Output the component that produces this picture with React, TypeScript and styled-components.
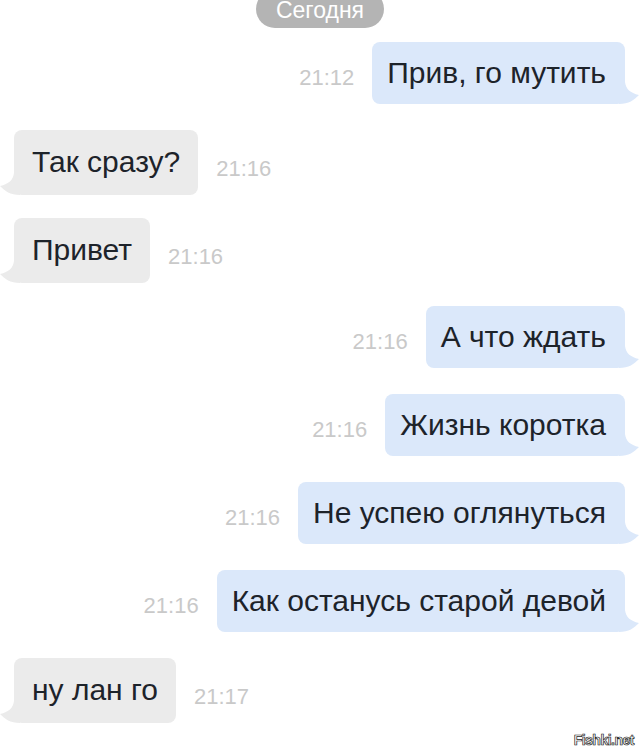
import React from "react";
import styled, { createGlobalStyle } from "styled-components";

type Side = "in" | "out";

const messages: { side: Side; text: string; time: string }[] = [
  { side: "out", text: "Прив, го мутить", time: "21:12" },
  { side: "in", text: "Так сразу?", time: "21:16" },
  { side: "in", text: "Привет", time: "21:16" },
  { side: "out", text: "А что ждать", time: "21:16" },
  { side: "out", text: "Жизнь коротка", time: "21:16" },
  { side: "out", text: "Не успею оглянуться", time: "21:16" },
  { side: "out", text: "Как останусь старой девой", time: "21:16" },
  { side: "in", text: "ну лан го", time: "21:17" },
];

const colors = {
  out: "#dbe8fa",
  in: "#ebebeb",
};

const GlobalStyle = createGlobalStyle`
  html, body {
    margin: 0;
    padding: 0;
    background: #ffffff;
  }
  body {
    font-family: "Liberation Sans", Arial, sans-serif;
  }
`;

const Screen = styled.div`
  position: relative;
  width: 640px;
  height: 753px;
  overflow: hidden;
  background: #ffffff;
  display: flex;
  flex-direction: column;
  align-items: center;
`;

const DatePill = styled.div`
  margin-top: -10px;
  height: 38px;
  padding: 0 20px;
  border-radius: 19px;
  background: #b4b4b4;
  color: #ffffff;
  font-size: 23px;
  line-height: 40px;
`;

const Feed = styled.div`
  width: 100%;
  margin-top: 14px;
  display: flex;
  flex-direction: column;
`;

const Row = styled.div<{ $side: Side }>`
  height: 88px;
  display: flex;
  align-items: flex-start;
  gap: 18px;
  flex-direction: ${(p) => (p.$side === "out" ? "row-reverse" : "row")};
  padding: ${(p) => (p.$side === "out" ? "0 15px 0 0" : "0 0 0 14px")};
`;

const Bubble = styled.div<{ $side: Side }>`
  position: relative;
  padding: ${(p) => (p.$side === "out" ? "14px 19px 14px 15px" : "15px 18px 16px 18px")};
  border-radius: 8px;
  background: ${(p) => colors[p.$side]};
  color: #1d232a;
  font-size: 30px;
  line-height: 34px;
  white-space: nowrap;
`;

const Tail = styled.svg<{ $side: Side }>`
  position: absolute;
  bottom: 0;
  width: 20px;
  height: 22px;
  ${(p) => (p.$side === "out" ? "right: -14px;" : "left: -14px; transform: scaleX(-1);")}
`;

const Time = styled.span<{ $side: Side }>`
  margin-top: ${(p) => (p.$side === "out" ? "24px" : "27px")};
  color: #c9c9c9;
  font-size: 22px;
  line-height: 24px;
`;

const Watermark = styled.div`
  position: absolute;
  right: 6px;
  bottom: 6px;
  font-family: "Liberation Sans", Arial, sans-serif;
  font-weight: bold;
  font-size: 14px;
  line-height: 14px;
  letter-spacing: -0.5px;
  color: #ffffff;
  -webkit-text-stroke: 0.7px #1a1a1a;
`;

export default function App() {
  return (
    <>
      <GlobalStyle />
      <Screen>
        <DatePill>Сегодня</DatePill>
        <Feed>
          {messages.map((m, i) => (
            <Row key={i} $side={m.side}>
              <Bubble $side={m.side}>
                {m.text}
                <Tail $side={m.side} viewBox="0 0 20 22">
                  <path d="M0 0 L6 0 C7 7 11 11 20 13 C15 18 10 22 0 22 Z" fill={colors[m.side]} />
                </Tail>
              </Bubble>
              <Time $side={m.side}>{m.time}</Time>
            </Row>
          ))}
        </Feed>
        <Watermark>Fishki.net</Watermark>
      </Screen>
    </>
  );
}
